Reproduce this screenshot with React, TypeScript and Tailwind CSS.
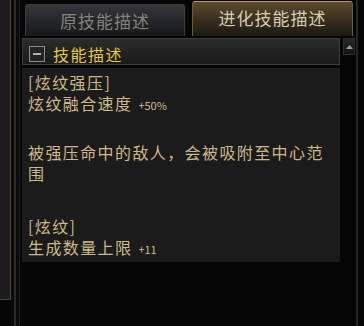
import React from 'react';

const font = { fontFamily: '"Noto Sans CJK SC", "Noto Sans", sans-serif' };

const App: React.FC = () => {
  return (
    <div className="flex h-[326px] w-[364px] overflow-hidden bg-[#050505]" style={font}>
      {/* left edge: neighbour panel + frame lines */}
      <div className="flex h-full w-[22px] shrink-0">
        <div className="h-[300px] w-[11px] border-r border-b border-[#4a4434] bg-[#1d1d1f]" />
        <div className="w-[3px] bg-[#0b0b0b]" />
        <div className="w-[2px] bg-[#2a2a2a]" />
        <div className="w-[3px] bg-[#0a0a0a]" />
        <div className="w-[1px] bg-[#1e1e1e]" />
      </div>

      <div className="flex w-[336px] shrink-0 flex-col border-r-2 border-[#262626]">
        {/* tabs */}
        <div className="flex h-[36px] items-end gap-[7px] pl-[3px]">
          <div className="flex h-[32px] w-[160px] items-center justify-center rounded-t-[3px] border border-b-0 border-[#3b3c40] bg-gradient-to-b from-[#34363b] to-[#18191c] text-[17px] tracking-[1px] text-[#85837b]">
            原技能描述
          </div>
          <div className="flex h-[35px] w-[161px] items-center justify-center rounded-t-[3px] border border-b-0 border-[#6d5d35] border-t-[#b89c55] bg-gradient-to-b from-[#5c4c2c] via-[#3a3020] to-[#1c1812] pb-[2px] text-[17px] tracking-[1px] text-[#d6cdb4]">
            进化技能描述
          </div>
        </div>

        {/* body */}
        <div className="mt-[2px] flex gap-[3px]">
          <div className="flex w-[318px] flex-col">
            <div className="flex h-[27px] items-center gap-[8px] border border-[#3c3c3c] bg-gradient-to-b from-[#2c2c2c] to-[#1a1a1a] pl-[6px] pt-[4px]">
              <div className="flex h-[16px] w-[16px] items-center justify-center border border-[#8c8c8c] bg-[#242424]">
                <div className="h-[2px] w-[8px] bg-[#b4b4b4]" />
              </div>
              <span className="text-[16px] leading-[20px] tracking-[1.5px] text-[#e6c93a]">技能描述</span>
            </div>

            <div className="mt-[3px] h-[194px] bg-[#1c1b1b] pl-[6px] pt-[4px] text-[16px] leading-[21px] tracking-[1.4px] text-[#cdb98a]">
              <div>[炫纹强压]</div>
              <div className="flex items-baseline">
                炫纹融合速度<span className="ml-[6px] text-[11px] tracking-normal">+50%</span>
              </div>
              <div className="h-[26px]" />
              <div>被强压命中的敌人，会被吸附至中心范</div>
              <div>围</div>
              <div className="h-[32px]" />
              <div>[炫纹]</div>
              <div className="flex items-baseline">
                生成数量上限<span className="ml-[6px] text-[11px] tracking-normal">+11</span>
              </div>
            </div>
          </div>

          {/* scrollbar up button */}
          <div className="flex h-[17px] w-[12px] items-center justify-center border border-[#2e2e2e] bg-gradient-to-b from-[#262626] to-[#141414]">
            <svg width="7" height="4" viewBox="0 0 7 4">
              <path d="M0 4 L3.5 0 L7 4 Z" fill="#9a9a9a" />
            </svg>
          </div>
        </div>
      </div>
    </div>
  );
};

export default App;
